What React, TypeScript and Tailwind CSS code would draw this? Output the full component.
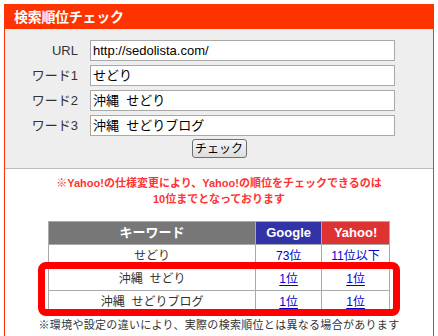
const FONT = "font-['Liberation_Sans','Noto_Sans_CJK_JP',sans-serif]";

const fields = [
  { label: 'URL', value: 'http://sedolista.com/' },
  { label: 'ワード1', value: 'せどり' },
  { label: 'ワード2', value: '沖縄\u00a0\u00a0せどり' },
  { label: 'ワード3', value: '沖縄\u00a0\u00a0せどりブログ' },
];

const rows = [
  { kw: 'せどり', google: '73位', yahoo: '11位以下' },
  { kw: '沖縄\u00a0\u00a0せどり', google: '1位', yahoo: '1位' },
  { kw: '沖縄\u00a0\u00a0せどりブログ', google: '1位', yahoo: '1位' },
];

function RankLink({ children }: { children: string }) {
  return <a className="text-[#0000cc] underline underline-offset-2 text-[12px]">{children}</a>;
}

export default function App() {
  return (
    <div className={`relative w-[438px] h-[336px] overflow-hidden bg-white ${FONT}`}>
      <div className="ml-[4px] mt-[4px] w-[430px] h-[340px] border-x border-[#ff3300]">
        <div className="h-[25px] bg-[#ff3300] pl-[9px] flex items-center">
          <span className="text-white font-bold text-[14px] leading-none tracking-[-0.3px]">検索順位チェック</span>
        </div>

        <div className="bg-[#eeeeee] border-b border-[#bbbbbb] pt-[11px] pb-[10px] flex flex-col gap-[4px]">
          {fields.map((f) => (
            <div key={f.label} className="flex items-center h-[21px]">
              <span className="w-[73px] text-right text-[13px] text-[#333] leading-none">{f.label}</span>
              <div className="ml-[12px] w-[305px] h-[21px] bg-white border border-[#a9a9a9] flex items-center px-[2px] text-[13px] text-black leading-none">
                {f.value}
              </div>
            </div>
          ))}
          <div className="flex justify-center mt-[-1px]">
            <button className="w-[55px] h-[19px] rounded-[3px] border border-[#707070] bg-gradient-to-b from-[#f6f6f6] to-[#dddddd] text-[12px] text-black leading-none">
              チェック
            </button>
          </div>
        </div>

        <div className="pt-[6px] text-center text-[#ff3333] font-bold text-[11px] leading-[16px]">
          <p>※Yahoo!の仕様変更により、Yahoo!の順位をチェックできるのは</p>
          <p>10位までとなっております</p>
        </div>

        <table className="mt-[14px] ml-[43px] w-[342px] border-collapse text-center">
          <thead>
            <tr className="h-[23px] text-white font-bold text-[13px]">
              <th className="w-[208px] bg-[#777777] border border-[#aaaaaa]">キーワード</th>
              <th className="w-[66px] bg-[#3333a8] border border-[#aaaaaa]">Google</th>
              <th className="w-[68px] bg-[#dd3333] border border-[#aaaaaa]">Yahoo!</th>
            </tr>
          </thead>
          <tbody>
            {rows.map((r, i) => (
              <tr key={i} className="h-[23px] text-[12px] text-[#333]">
                <td className="border border-[#aaaaaa]">{r.kw}</td>
                <td className="border border-[#aaaaaa]">
                  <RankLink>{r.google}</RankLink>
                </td>
                <td className="border border-[#aaaaaa]">
                  <RankLink>{r.yahoo}</RankLink>
                </td>
              </tr>
            ))}
          </tbody>
        </table>

        <p className="mt-[4px] text-center text-[11px] text-[#333] leading-[14px] tracking-[0.3px]">
          ※環境や設定の違いにより、実際の検索順位とは異なる場合があります
        </p>
      </div>

      {/* highlight around the Okinawa rows */}
      <div className="absolute left-[38px] top-[262px] w-[362px] h-[54px] border-[7px] border-[#ff0000] rounded-[8px]" />
    </div>
  );
}
